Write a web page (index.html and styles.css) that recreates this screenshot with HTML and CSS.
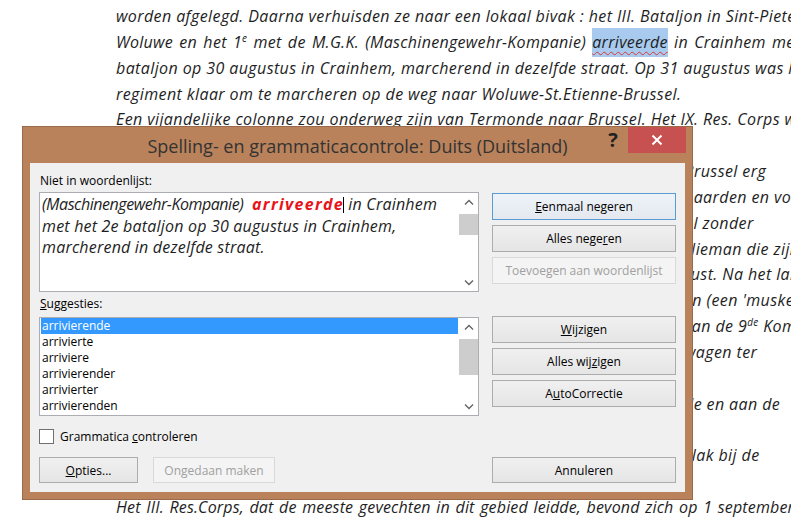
FILE: index.html
```html
<!DOCTYPE html>
<html>
<head>
<meta charset="utf-8">
<link rel="stylesheet" href="styles.css">
</head>
<body>
<div class="doc">
  <div class="ln j">worden afgelegd. Daarna verhuisden ze naar een lokaal bivak : het III. Bataljon in Sint-Pieters-</div>
  <div class="ln j l2w">Woluwe en het 1<sup>e</sup> met de M.G.K. (Maschinengewehr-Kompanie) <span class="sel">arriveerde</span> in Crainhem met</div>
  <div class="ln j">bataljon op 30 augustus in Crainhem, marcherend in dezelfde straat. Op 31 augustus was het</div>
  <div class="ln">regiment klaar om te marcheren op de weg naar Woluwe-St.Etienne-Brussel.</div>
  <div class="ln j">Een vijandelijke colonne zou onderweg zijn van Termonde naar Brussel. Het IX. Res. Corps was</div>
  <div class="ln">&nbsp;</div>
  <div class="ln tail">Brussel erg</div>
  <div class="ln tail">paarden en voertuigen</div>
  <div class="ln tail">al zonder</div>
  <div class="ln tail">Nieman die zijn</div>
  <div class="ln tail">rust. Na het lange</div>
  <div class="ln tail">en (een 'musketier'</div>
  <div class="ln tail">van de 9<sup>de</sup> Kompagnie</div>
  <div class="ln tail">wagen ter</div>
  <div class="ln">&nbsp;</div>
  <div class="ln tail">de en aan de</div>
  <div class="ln">&nbsp;</div>
  <div class="ln tail">vlak bij de</div>
  <div class="ln">&nbsp;</div>
  <div class="ln j tight">Het III. Res.Corps, dat de meeste gevechten in dit gebied leidde, bevond zich op 1 september</div>
</div>

<div class="dlg">
  <div class="tbar">
    <div></div>
    <div class="title">Spelling- en grammaticacontrole: Duits (Duitsland)</div>
    <div class="ctrls">
      <span class="help">?</span>
      <span class="close"><svg width="12" height="12" viewBox="0 0 12 12"><path d="M1.5 1.5 L10.5 10.5 M10.5 1.5 L1.5 10.5" stroke="#fff" stroke-width="2" fill="none"/></svg></span>
    </div>
  </div>
  <div class="client">
    <div class="lcol">
      <div class="lbl">Niet in woordenlijst:</div>
      <div class="tbox">
        <div class="ttext"><span class="cond">(Maschinengewehr-Kompanie)</span> &nbsp;<b class="err">arriveerde</b><span class="caret"></span> in Crainhem<br>met het 2e bataljon op 30 augustus in Crainhem,<br>marcherend in dezelfde straat.</div>
        <div class="sb">
          <div class="arr"><svg width="10" height="6" viewBox="0 0 10 6"><polyline points="1,5.5 5,1.5 9,5.5" stroke="#606060" stroke-width="1.3" fill="none"/></svg></div>
          <div class="track"><div class="thumb t1"></div></div>
          <div class="arr"><svg width="10" height="6" viewBox="0 0 10 6"><polyline points="1,0.5 5,4.5 9,0.5" stroke="#606060" stroke-width="1.3" fill="none"/></svg></div>
        </div>
      </div>
      <div class="lbl l2"><u>S</u>uggesties:</div>
      <div class="lbox">
        <div class="items">
          <div class="it on">arrivierende</div>
          <div class="it">arrivierte</div>
          <div class="it">arriviere</div>
          <div class="it">arrivierender</div>
          <div class="it">arrivierter</div>
          <div class="it">arrivierenden</div>
        </div>
        <div class="sb">
          <div class="arr"><svg width="10" height="6" viewBox="0 0 10 6"><polyline points="1,5.5 5,1.5 9,5.5" stroke="#606060" stroke-width="1.3" fill="none"/></svg></div>
          <div class="track"><div class="thumb t2"></div></div>
          <div class="arr"><svg width="10" height="6" viewBox="0 0 10 6"><polyline points="1,0.5 5,4.5 9,0.5" stroke="#606060" stroke-width="1.3" fill="none"/></svg></div>
        </div>
      </div>
      <div class="chkrow"><span class="cb"></span><span>Grammatica <u>c</u>ontroleren</span></div>
      <div class="brow">
        <div class="btn opt"><span><u>O</u>pties...</span></div>
        <div class="btn dis undo">Ongedaan maken</div>
      </div>
    </div>
    <div class="rcol">
      <div class="btn def"><span><u>E</u>enmaal negeren</span></div>
      <div class="btn g"><span>Alles nege<u>r</u>en</span></div>
      <div class="btn g dis">Toevoegen aan woordenlijst</div>
      <div class="btn g2"><span><u>W</u>ijzigen</span></div>
      <div class="btn g"><span>Alles wij<u>z</u>igen</span></div>
      <div class="btn g"><span>A<u>u</u>toCorrectie</span></div>
      <div class="btn last">Annuleren</div>
    </div>
  </div>
</div>
</body>
</html>
```

FILE: styles.css
```css
* { box-sizing: border-box; }
html, body { margin: 0; padding: 0; }
body {
  width: 791px;
  height: 524px;
  overflow: hidden;
  background: #fff;
  position: relative;
  font-family: "Open Sans", "Noto Sans", sans-serif;
}

/* document behind dialog */
.doc {
  padding: 4px 0 0 116px;
  font-family: "Open Sans", "Noto Sans", sans-serif;
  font-style: italic;
  font-size: 16px;
  letter-spacing: 0.4px;
  line-height: 25.85px;
  color: #1e1e1e;
}
.ln { white-space: nowrap; width: 694px; height: 25.85px; }
.j { text-align: justify; text-align-last: justify; }
.l2w { letter-spacing: 0.3px; width: 684px; }
.tight { letter-spacing: 0.15px; width: 678px; }
.tail { padding-left: 568px; }
.doc sup { font-size: 0.62em; line-height: 0; vertical-align: 0.6em; }
.sel {
  background: #a8caee;
  padding: 3px 0 4px;
  text-decoration: underline wavy #d63a3a;
  text-decoration-thickness: 1px;
  text-underline-offset: 3px;
}

/* dialog */
.dlg {
  position: absolute;
  left: 22px;
  top: 126px;
  width: 671px;
  height: 374px;
  background: #b9825b;
  border: 1px solid #9a6a4a;
  display: flex;
  flex-direction: column;
}
.tbar {
  height: 36px;
  display: grid;
  grid-template-columns: 1fr auto 1fr;
  align-items: center;
}
.title {
  font-size: 18px;
  color: #333;
  padding-top: 1px;
}
.ctrls {
  align-self: start;
  display: flex;
  justify-content: flex-end;
  padding-right: 6px;
}
.help {
  width: 26px;
  height: 26px;
  margin-right: 2px;
  font-weight: 700;
  font-size: 20px;
  line-height: 26px;
  text-align: center;
  color: #222;
}
.close {
  width: 58px;
  height: 26px;
  background: #c75050;
  display: flex;
  align-items: center;
  justify-content: center;
}

.client {
  margin: 0 7px 7px 7px;
  height: 329px;
  background: #f0f0f0;
  padding: 10px 9px 9px 9px;
  display: flex;
  gap: 13px;
  font-size: 12px;
  color: #000;
}
.lcol { width: 440px; display: flex; flex-direction: column; }
.rcol { width: 184px; display: flex; flex-direction: column; padding-top: 20px; }

.lbl { height: 16px; line-height: 16px; padding-left: 1px; }
.l2 { margin-top: 4px; }

.tbox {
  margin-top: 3px;
  height: 100px;
  border: 1px solid #abadb3;
  background: #fff;
  display: flex;
}
.ttext {
  flex: 1;
  padding: 1px 0 0 2px;
  font-style: italic;
  font-size: 16px;
  letter-spacing: 0.2px;
  line-height: 21.5px;
  color: #1e1e1e;
  white-space: nowrap;
  overflow: hidden;
}
.cond { letter-spacing: -0.45px; }
.err { color: #e8141b; font-weight: 700; letter-spacing: 1.3px; }
.caret {
  display: inline-block;
  width: 0;
  height: 16px;
  margin-left: -1px;
  border-left: 1px solid #000;
  vertical-align: -3px;
}

.sb {
  width: 19px;
  display: flex;
  flex-direction: column;
  background: #fff;
}
.arr { height: 17px; display: flex; align-items: center; justify-content: center; }
.track { flex: 1; }
.thumb { background: #cdcdcd; }
.t1 { margin-top: 4px; height: 21px; }
.t2 { margin-top: 4px; height: 36px; }

.lbox {
  margin-top: 5px;
  height: 99px;
  border: 1px solid #abadb3;
  background: #fff;
  display: flex;
}
.items { flex: 1; padding: 0 1px; }
.it { height: 16px; line-height: 16px; padding-left: 1px; }
.it.on { background: #3399ff; color: #fff; }

.chkrow {
  margin-top: 12px;
  height: 16px;
  display: flex;
  align-items: center;
  gap: 6px;
}
.cb {
  width: 15px;
  height: 15px;
  border: 1px solid #707070;
  background: #fff;
}

.brow { margin-top: 13px; display: flex; gap: 15px; }

.btn {
  height: 27px;
  border: 1px solid #acacac;
  background: linear-gradient(#f0f0f0, #e5e5e5);
  display: flex;
  align-items: center;
  justify-content: center;
  color: #000;
}
.btn.def { border-color: #5b9bd5; background: linear-gradient(#eef3f8, #e3e9ef); }
.btn.dis { border-color: #d9d9d9; background: #f4f4f4; color: #a0a0a0; }
.btn.g { margin-top: 5px; }
.btn.g2 { margin-top: 32px; }
.btn.last { margin-top: auto; height: 26px; }
.opt { width: 99px; height: 26px; }
.undo { width: 122px; height: 26px; }
```
